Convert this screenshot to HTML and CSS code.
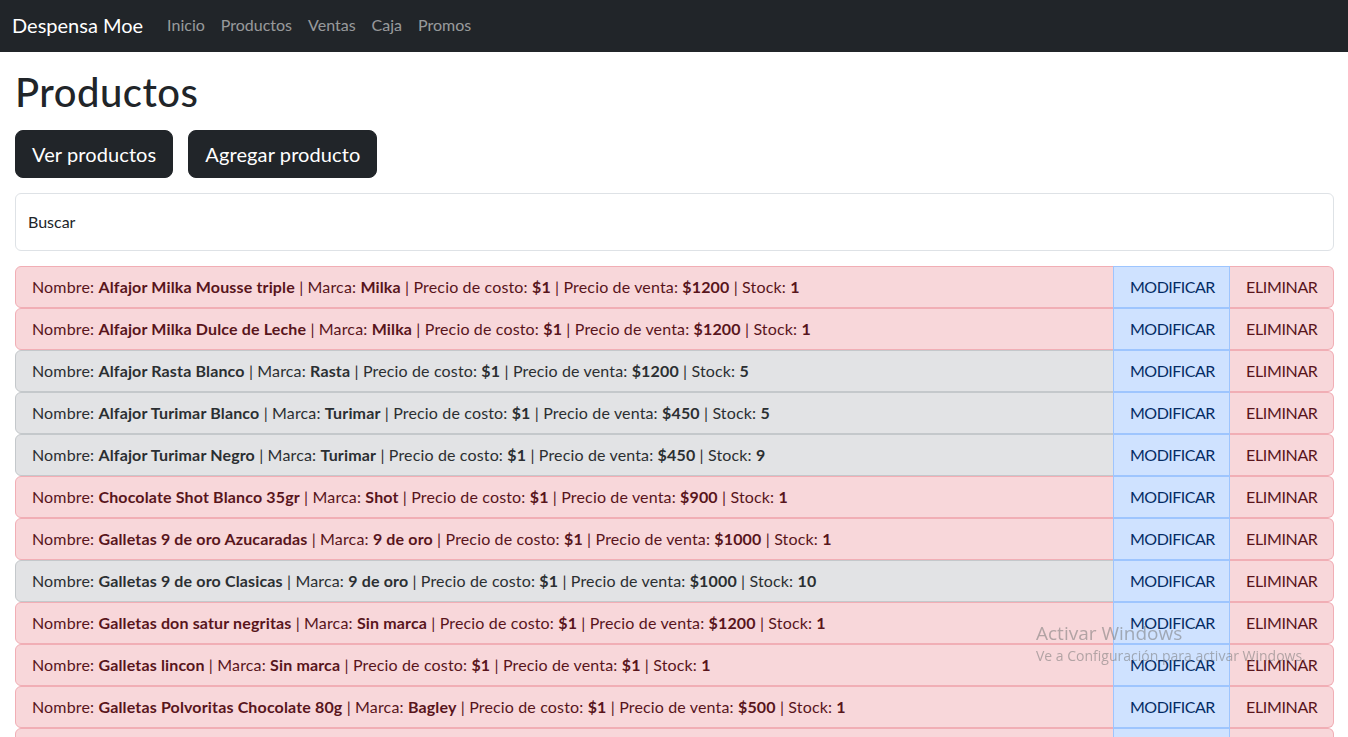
FILE: index.html
```html
<!DOCTYPE html>
<html lang="es">
<head>
<meta charset="utf-8">
<title>Despensa Moe - Productos</title>
<link rel="stylesheet" href="styles.css">
</head>
<body>
<nav class="navbar">
  <a class="brand" href="#">Despensa Moe</a>
  <ul class="nav">
    <li><a href="#">Inicio</a></li>
    <li><a href="#">Productos</a></li>
    <li><a href="#">Ventas</a></li>
    <li><a href="#">Caja</a></li>
    <li><a href="#">Promos</a></li>
  </ul>
</nav>
<main class="container">
  <h1 class="title">Productos</h1>
  <div class="actions">
    <button class="btn">Ver productos</button>
    <button class="btn">Agregar producto</button>
  </div>
  <div class="search">
    <input type="text" id="buscar" placeholder=" ">
    <label for="buscar">Buscar</label>
  </div>
  <div class="list">
    <div class="row danger"><div class="info">Nombre: <b>Alfajor Milka Mousse triple</b> | Marca: <b>Milka</b> | Precio de costo: <b>$1</b> | Precio de venta: <b>$1200</b> | Stock: <b>1</b></div><a class="mod">MODIFICAR</a><a class="del">ELIMINAR</a></div>
    <div class="row danger"><div class="info">Nombre: <b>Alfajor Milka Dulce de Leche</b> | Marca: <b>Milka</b> | Precio de costo: <b>$1</b> | Precio de venta: <b>$1200</b> | Stock: <b>1</b></div><a class="mod">MODIFICAR</a><a class="del">ELIMINAR</a></div>
    <div class="row secondary"><div class="info">Nombre: <b>Alfajor Rasta Blanco</b> | Marca: <b>Rasta</b> | Precio de costo: <b>$1</b> | Precio de venta: <b>$1200</b> | Stock: <b>5</b></div><a class="mod">MODIFICAR</a><a class="del">ELIMINAR</a></div>
    <div class="row secondary"><div class="info">Nombre: <b>Alfajor Turimar Blanco</b> | Marca: <b>Turimar</b> | Precio de costo: <b>$1</b> | Precio de venta: <b>$450</b> | Stock: <b>5</b></div><a class="mod">MODIFICAR</a><a class="del">ELIMINAR</a></div>
    <div class="row secondary"><div class="info">Nombre: <b>Alfajor Turimar Negro</b> | Marca: <b>Turimar</b> | Precio de costo: <b>$1</b> | Precio de venta: <b>$450</b> | Stock: <b>9</b></div><a class="mod">MODIFICAR</a><a class="del">ELIMINAR</a></div>
    <div class="row danger"><div class="info">Nombre: <b>Chocolate Shot Blanco 35gr</b> | Marca: <b>Shot</b> | Precio de costo: <b>$1</b> | Precio de venta: <b>$900</b> | Stock: <b>1</b></div><a class="mod">MODIFICAR</a><a class="del">ELIMINAR</a></div>
    <div class="row danger"><div class="info">Nombre: <b>Galletas 9 de oro Azucaradas</b> | Marca: <b>9 de oro</b> | Precio de costo: <b>$1</b> | Precio de venta: <b>$1000</b> | Stock: <b>1</b></div><a class="mod">MODIFICAR</a><a class="del">ELIMINAR</a></div>
    <div class="row secondary"><div class="info">Nombre: <b>Galletas 9 de oro Clasicas</b> | Marca: <b>9 de oro</b> | Precio de costo: <b>$1</b> | Precio de venta: <b>$1000</b> | Stock: <b>10</b></div><a class="mod">MODIFICAR</a><a class="del">ELIMINAR</a></div>
    <div class="row danger"><div class="info">Nombre: <b>Galletas don satur negritas</b> | Marca: <b>Sin marca</b> | Precio de costo: <b>$1</b> | Precio de venta: <b>$1200</b> | Stock: <b>1</b></div><a class="mod">MODIFICAR</a><a class="del">ELIMINAR</a></div>
    <div class="row danger"><div class="info">Nombre: <b>Galletas lincon</b> | Marca: <b>Sin marca</b> | Precio de costo: <b>$1</b> | Precio de venta: <b>$1</b> | Stock: <b>1</b></div><a class="mod">MODIFICAR</a><a class="del">ELIMINAR</a></div>
    <div class="row danger"><div class="info">Nombre: <b>Galletas Polvoritas Chocolate 80g</b> | Marca: <b>Bagley</b> | Precio de costo: <b>$1</b> | Precio de venta: <b>$500</b> | Stock: <b>1</b></div><a class="mod">MODIFICAR</a><a class="del">ELIMINAR</a></div>
    <div class="row danger"><div class="info">Nombre: <b>Galletas Rumba</b> | Marca: <b>Bagley</b> | Precio de costo: <b>$1</b> | Precio de venta: <b>$600</b> | Stock: <b>1</b></div><a class="mod">MODIFICAR</a><a class="del">ELIMINAR</a></div>
  </div>
</main>
<div class="watermark">
  <div class="wm-title">Activar Windows</div>
  <div class="wm-sub">Ve a Configuración para activar Windows.</div>
</div>
</body>
</html>
```
FILE: styles.css
```css
* { box-sizing: border-box; }
html, body { margin: 0; padding: 0; }
body {
  font-family: Lato, "Open Sans", sans-serif;
  font-size: 16px;
  line-height: 1.5;
  color: #212529;
  background: #fff;
}
a { text-decoration: none; }

.navbar {
  display: flex;
  align-items: center;
  height: 52px;
  padding: 0 12px 3px;
  background: #212529;
}
.brand {
  font-size: 20px;
  color: #fff;
  margin-right: 16px;
}
.nav {
  display: flex;
  list-style: none;
  margin: 0;
  padding: 0;
}
.nav a {
  display: block;
  padding: 8px;
  color: rgba(255,255,255,0.55);
}

.container {
  padding: 0 14px 0 15px;
}
.title {
  font-size: 40px;
  font-weight: 500;
  line-height: 1.2;
  letter-spacing: 0.5px;
  margin: 0;
  padding-top: 16px;
  padding-bottom: 14px;
}
.actions {
  display: flex;
  gap: 15px;
  margin-bottom: 15px;
}
.btn {
  font-family: inherit;
  font-size: 20px;
  line-height: 30px;
  letter-spacing: 0.1px;
  padding: 8px 16px;
  border: 1px solid #212529;
  border-radius: 8px;
  background: #212529;
  color: #fff;
}
.search {
  position: relative;
  margin-bottom: 15px;
}
.search input {
  display: block;
  width: 100%;
  height: 58px;
  border: 1px solid #dee2e6;
  border-radius: 6px;
  font: inherit;
  padding: 16px 12px;
}
.search label {
  position: absolute;
  top: 0;
  left: 0;
  padding: 16px 12px;
  margin: 1px;
  color: #212529;
  pointer-events: none;
}

.list { display: flex; flex-direction: column; }
.row {
  display: flex;
  height: 42px;
}
.row > * {
  padding: 8px 16px;
  border: 1px solid;
  line-height: 24px;
}
.row > * + * { border-left-width: 0; }
.row > :first-child { border-radius: 6px 0 0 6px; }
.row > :last-child { border-radius: 0 6px 6px 0; }
.info { flex: 1; white-space: nowrap; overflow: hidden; letter-spacing: 0.15px; }
.info b { font-weight: 700; }

.danger .info { background: #f8d7da; color: #58151c; border-color: #f1aeb5; }
.secondary .info { background: #e2e3e5; color: #2b2f32; border-color: #c4c8cb; }
.mod {
  width: 117px;
  background: #cfe2ff;
  color: #052c65;
  border-color: #9ec5fe;
  border-left-width: 1px !important;
  margin-left: -1px;
  letter-spacing: -0.5px;
}
.del {
  width: 104px;
  background: #f8d7da;
  color: #58151c;
  border-color: #f1aeb5;
  letter-spacing: -0.35px;
}

.watermark {
  position: fixed;
  left: 1036px;
  top: 620px;
  color: rgba(120,120,120,0.55);
  font-family: "Open Sans", sans-serif;
  pointer-events: none;
}
.wm-title { font-size: 19px; line-height: 26px; }
.wm-sub { font-size: 14px; line-height: 20px; }
```
